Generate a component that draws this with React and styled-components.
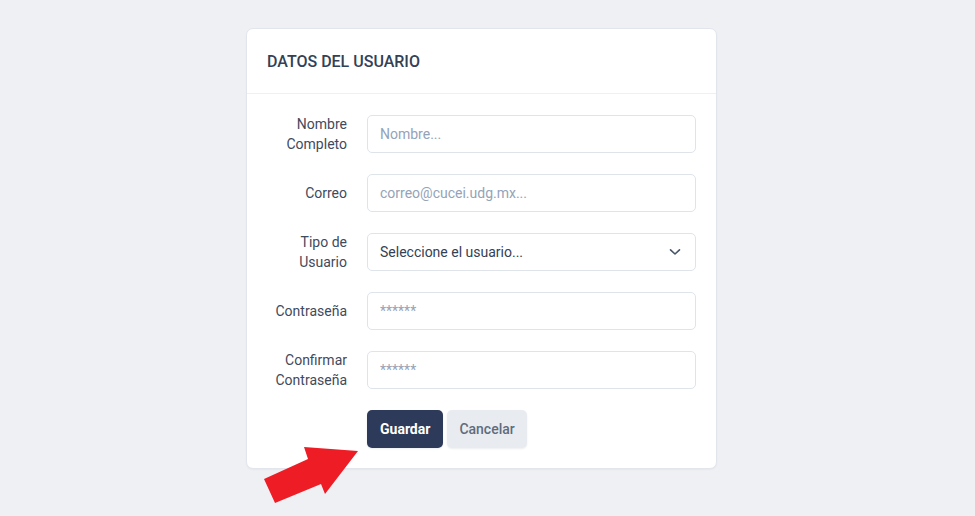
import React from 'react';
import styled, { createGlobalStyle } from 'styled-components';

const GlobalStyle = createGlobalStyle`
  body {
    margin: 0;
    background: #eef0f4;
    font-family: Roboto, "Liberation Sans", sans-serif;
  }
`;

const Page = styled.div`
  display: flex;
  justify-content: center;
  padding: 28px 12px 0 0;
  min-height: 516px;
  box-sizing: border-box;
`;

const Card = styled.div`
  position: relative;
  width: 471px;
  background: #ffffff;
  border: 1px solid #e2e6ec;
  border-radius: 7px;
  box-sizing: border-box;
  box-shadow: 0 1px 2px rgba(15, 23, 42, 0.04);
  align-self: flex-start;
`;

const CardHeader = styled.div`
  padding: 0 20px;
  height: 64px;
  display: flex;
  align-items: center;
  border-bottom: 1px solid #edf0f4;
`;

const Title = styled.h2`
  margin: 0;
  font-size: 16px;
  font-weight: 500;
  color: #334155;
`;

const CardBody = styled.form`
  padding: 21px 20px 20px 20px;
  display: flex;
  flex-direction: column;
  gap: 21px;
`;

const Row = styled.div`
  display: grid;
  grid-template-columns: 80px 1fr;
  grid-template-rows: 38px;
  column-gap: 20px;
  align-items: center;
`;

const Label = styled.label`
  text-align: right;
  font-size: 14px;
  line-height: 20px;
  color: #3f4a5c;
  margin-top: -1px;
`;

const Input = styled.input`
  height: 38px;
  box-sizing: border-box;
  border: 1px solid #dfe4eb;
  border-radius: 5px;
  padding: 0 12px;
  font-family: inherit;
  font-size: 14px;
  color: #334155;
  outline: none;
  width: 100%;
  &::placeholder {
    color: #94a3b8;
  }
`;

const SelectBox = styled.div`
  height: 38px;
  box-sizing: border-box;
  border: 1px solid #dfe4eb;
  border-radius: 5px;
  padding: 0 14px 0 12px;
  display: flex;
  align-items: center;
  justify-content: space-between;
  font-size: 14px;
  color: #334155;
`;

const Actions = styled.div`
  display: flex;
  gap: 4px;
  padding-left: 100px;
`;

const Button = styled.button`
  height: 38px;
  border: none;
  border-radius: 5px;
  padding: 0 ${p => (p.$primary ? 13 : 12)}px;
  font-family: inherit;
  font-size: 14px;
  font-weight: ${p => (p.$primary ? 700 : 500)};
  background: ${p => (p.$primary ? '#2d3a5a' : '#e8ecf1')};
  color: ${p => (p.$primary ? '#ffffff' : '#5f6b7d')};
  box-shadow: 0 1px 2px rgba(15, 23, 42, 0.08);
`;

const Arrow = styled.svg`
  position: absolute;
  left: 16px;
  top: 405px;
  pointer-events: none;
`;

const Chevron = () => (
  <svg width="12" height="8" viewBox="0 0 12 8" fill="none">
    <path d="M1.5 1.8 L6 6 L10.5 1.8" stroke="#475569" strokeWidth="1.6" strokeLinecap="round" strokeLinejoin="round" />
  </svg>
);

const fields = [
  { label: ['Nombre', 'Completo'], placeholder: 'Nombre...' },
  { label: ['Correo'], placeholder: 'correo@cucei.udg.mx...' },
  { label: ['Tipo de', 'Usuario'], select: 'Seleccione el usuario...' },
  { label: ['Contraseña'], placeholder: '******' },
  { label: ['Confirmar', 'Contraseña'], placeholder: '******' },
];

export default function App() {
  return (
    <>
      <GlobalStyle />
      <Page>
        <Card>
          <CardHeader>
            <Title>DATOS DEL USUARIO</Title>
          </CardHeader>
          <CardBody>
            {fields.map((f, i) => (
              <Row key={i}>
                <Label>
                  {f.label.map((l, j) => (
                    <div key={j}>{l}</div>
                  ))}
                </Label>
                {f.select ? (
                  <SelectBox>
                    <span>{f.select}</span>
                    <Chevron />
                  </SelectBox>
                ) : (
                  <Input placeholder={f.placeholder} />
                )}
              </Row>
            ))}
            <Actions>
              <Button type="button" $primary>Guardar</Button>
              <Button type="button">Cancelar</Button>
            </Actions>
          </CardBody>
          {/* red pointer arrow drawn over the card corner */}
          <Arrow width="100" height="95" viewBox="0 0 100 95">
            <polygon
              points="1,45 45,25 41,13 95,17 62,60 58,50 12,69"
              fill="#ee1c25"
            />
          </Arrow>
        </Card>
      </Page>
    </>
  );
}
